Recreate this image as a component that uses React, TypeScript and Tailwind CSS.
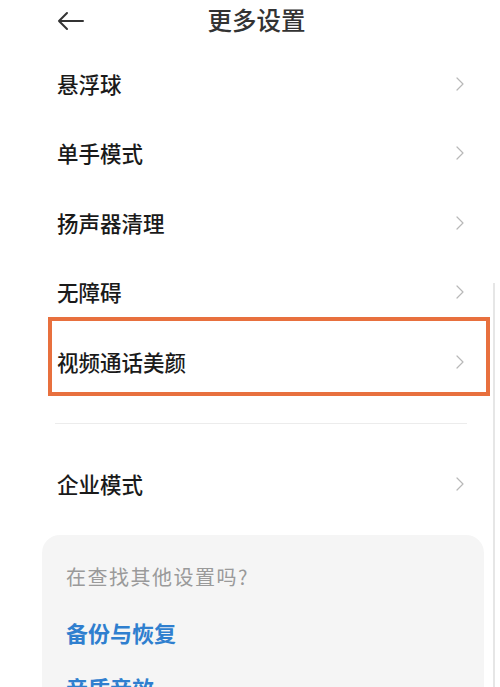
import { ChevronRight } from "lucide-react"

const font = { fontFamily: '"Noto Sans CJK SC", "Noto Sans", sans-serif' }

const items = ["悬浮球", "单手模式", "扬声器清理", "无障碍"]

function Row({ label }: { label: string }) {
  return (
    <div className="flex h-[69.5px] items-center justify-between pl-[57px] pr-[28px]">
      <span className="text-[21.5px] font-medium text-[#1a1a1a]">{label}</span>
      <ChevronRight className="h-[24px] w-[24px] text-[#b8b8b8]" strokeWidth={1.2} />
    </div>
  )
}

export default function App() {
  return (
    <div className="relative h-[687px] w-[500px] overflow-hidden bg-white" style={font}>
      {/* scrollbar */}
      <div className="absolute right-[5px] top-[283px] h-[410px] w-[2px] bg-[#e6e6e6]" />

      {/* header */}
      <div className="relative flex h-[49px] items-center justify-center pb-[9px] pl-[13px]">
        <svg className="absolute left-[57px] top-[11px]" width="28" height="20" viewBox="0 0 28 20" fill="none" stroke="#333" strokeWidth="2" strokeLinecap="round" strokeLinejoin="round">
          <path d="M2 10h24M10 2L2 10l8 8" />
        </svg>
        <h1 className="text-[24.5px] font-medium text-[#333]">更多设置</h1>
      </div>

      {items.map((label) => (
        <Row key={label} label={label} />
      ))}

      <div className="relative">
        <Row label="视频通话美颜" />
        <div className="absolute left-[48px] top-[-10px] h-[79px] w-[442px] border-4 border-[#e8703e]" />
      </div>

      <div className="ml-[55px] mr-[33px] mt-[26px] h-px bg-[#ececec]" />

      <div className="mt-[26px]">
        <Row label="企业模式" />
      </div>

      <div className="ml-[42px] mr-[16px] mt-[16px] rounded-[18px] bg-[#f5f5f5] px-[24px] pt-[27px] pb-[20px]">
        <p className="text-[20px] tracking-[1.5px] text-[#9a9a9a]">在查找其他设置吗?</p>
        <p className="mt-[24px] text-[22px] font-bold text-[#2f7fcf]">备份与恢复</p>
        <p className="mt-[22px] text-[22px] font-bold text-[#2f7fcf]">音质音效</p>
      </div>
    </div>
  )
}
